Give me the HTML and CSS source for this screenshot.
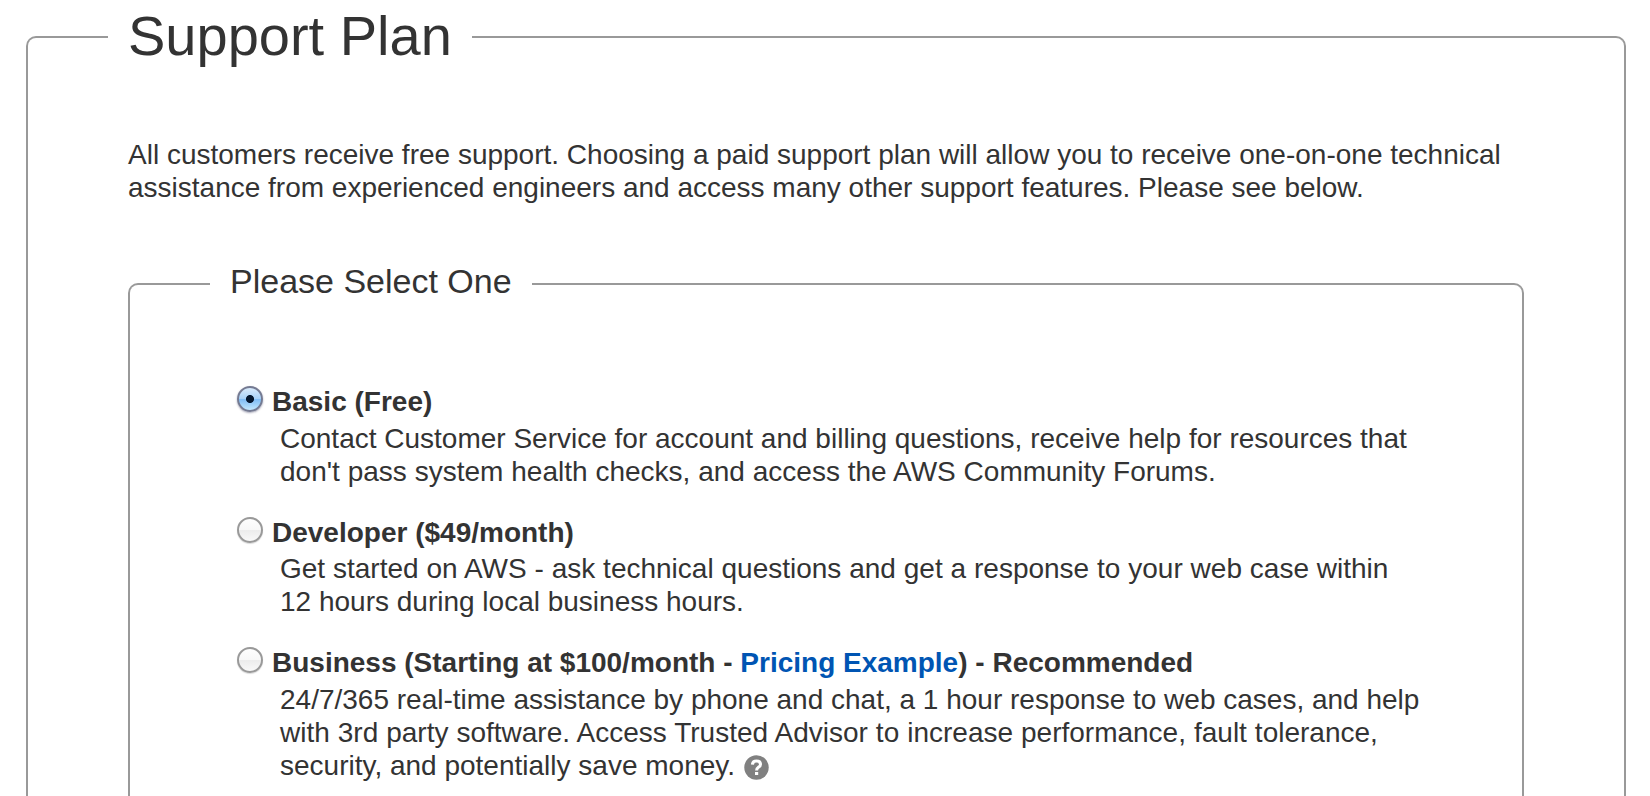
FILE: index.html
```html
<!DOCTYPE html>
<html lang="en">
<head>
<meta charset="utf-8">
<title>Support Plan</title>
<link rel="stylesheet" href="styles.css">
</head>
<body>
<fieldset class="panel">
  <legend class="panel-title">Support Plan</legend>
  <p class="intro">All customers receive free support. Choosing a paid support plan will allow you to receive one-on-one technical<br>assistance from experienced engineers and access many other support features. Please see below.</p>
  <fieldset class="choices">
    <legend class="choices-title">Please Select One</legend>
    <div class="plan">
      <label class="plan-name"><input class="radio" type="radio" name="plan" checked><span>Basic (Free)</span></label>
      <p class="plan-text">Contact Customer Service for account and billing questions, receive help for resources that<br><span class="loose">don't pass system health checks, and access the AWS Community Forums.</span></p>
    </div>
    <div class="plan">
      <label class="plan-name"><input class="radio" type="radio" name="plan"><span>Developer ($49/month)</span></label>
      <p class="plan-text"><span class="loose">Get started on AWS - ask technical questions and get a response to your web case within</span><br>12 hours during local business hours.</p>
    </div>
    <div class="plan">
      <label class="plan-name"><input class="radio" type="radio" name="plan"><span>Business (Starting at $100/month - <a class="link" href="#">Pricing Example</a>) - Recommended</span></label>
      <p class="plan-text">24/7/365 real-time assistance by phone and chat, a 1 hour response to web cases, and help<br><span class="looser">with 3rd party software. Access Trusted Advisor to increase performance, fault tolerance,</span><br>security, and potentially save money.<svg class="help" viewBox="0 0 25 25" aria-hidden="true"><circle cx="12.5" cy="12.5" r="12.2" fill="#808080"/><path d="M8.4 9.6C8.6 7.1 10.1 6.1 12.5 6.1C14.9 6.1 16.5 7.4 16.5 9.4C16.5 12.2 12.6 12 12.6 15.4" fill="none" stroke="#fff" stroke-width="3"/><path d="M11 17h3.2v3H11z" fill="#fff"/></svg></p>
    </div>
  </fieldset>
</fieldset>
</body>
</html>
```

FILE: styles.css
```css
body {
  margin: 0;
  background: #fff;
  color: #333;
  font: 28px/33px "Liberation Sans", Arial, sans-serif;
  white-space: nowrap;
}

.panel,
.choices {
  box-sizing: border-box;
  border: 2px solid #999;
  border-bottom: 0;
  border-radius: 10px 10px 0 0;
}

.panel {
  height: 796px;
  margin: 0 24px 0 26px;
  padding: 64px 100px 0;
}

.panel-title {
  margin-left: -20px;
  padding: 0 20px 2px;
  font-size: 56px;
  line-height: 72px;
}

.intro {
  margin: 0 0 60px;
}

.choices {
  height: 532px;
  margin: 0;
  padding: 81px 60px 0 107px;
}

.choices-title {
  margin-left: -27px;
  padding: 0 20px 6px;
  font-size: 34px;
  line-height: 34px;
}

.plan {
  margin-bottom: 28px;
}

.plan:last-child {
  margin-bottom: 0;
}

.plan-name {
  display: flex;
  align-items: flex-start;
  gap: 9px;
  font-weight: bold;
}

.plan-text {
  margin: 4px 0 0 43px;
}

.plan:nth-of-type(2) .plan-text {
  margin-top: 3px;
}

.loose {
  word-spacing: 0.08px;
}

.looser {
  word-spacing: 0.2px;
}

.radio {
  appearance: none;
  flex: none;
  box-sizing: border-box;
  width: 26px;
  height: 26px;
  margin: 1px 0 0;
  border: 2px solid #999;
  border-radius: 50%;
  background: linear-gradient(#fff 0%, #f8f8f8 48%, #ececec 52%, #fbfbfb 100%) border-box;
  box-shadow: 0 1px 1px rgba(0, 0, 0, 0.15);
}

.radio:checked {
  border-color: #747a92;
  background:
    radial-gradient(circle at center, #04162e 3.6px, transparent 4.4px) border-box,
    linear-gradient(#e2effc 0%, #a9d2f8 48%, #80bdf5 52%, #d0f0ff 100%) border-box;
  box-shadow: 0 1px 2px rgba(40, 40, 80, 0.4);
}

.link {
  color: #0055b3;
  text-decoration: none;
}

.help {
  width: 25px;
  height: 25px;
  margin-left: 9px;
  vertical-align: -5px;
}
```
